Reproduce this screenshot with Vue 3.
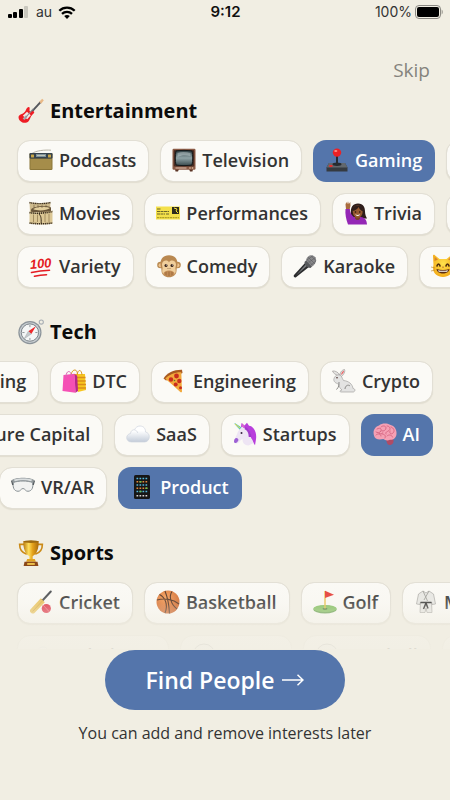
<template>
  <div class="page">
    <svg class="sprite" aria-hidden="true">
      <defs>
        <linearGradient id="gold" x1="0" x2="1" y1="0" y2="0">
          <stop offset="0" stop-color="#b97a10" />
          <stop offset="0.35" stop-color="#ffdf5c" />
          <stop offset="0.6" stop-color="#e5a31b" />
          <stop offset="1" stop-color="#a8690b" />
        </linearGradient>
        <linearGradient id="screen" x1="0" x2="0" y1="0" y2="1">
          <stop offset="0" stop-color="#2c3c40" />
          <stop offset="0.5" stop-color="#8fa3a6" />
          <stop offset="1" stop-color="#3a4a4d" />
        </linearGradient>
        <linearGradient id="snow" x1="0" x2="0" y1="0" y2="1">
          <stop offset="0.3" stop-color="#ffffff" />
          <stop offset="1" stop-color="#c3ccd9" />
        </linearGradient>
        <radialGradient id="orange" cx="0.4" cy="0.3" r="0.8">
          <stop offset="0" stop-color="#f79a52" />
          <stop offset="1" stop-color="#c4551a" />
        </radialGradient>
        <radialGradient id="yellow" cx="0.5" cy="0.4" r="0.7">
          <stop offset="0" stop-color="#ffe24d" />
          <stop offset="1" stop-color="#f2a412" />
        </radialGradient>
      </defs>

      <symbol id="guitar" viewBox="0 0 24 24">
        <path d="M11.5 14 21 3.6" stroke="#55575c" stroke-width="1.8" />
        <path d="m19.6 3.4 2.7-2.6 1.5 1.3-2.4 3.2z" fill="#e9b987" />
        <path d="M7.2 11.4c1-2.7 2.7-3.6 3.4-2.7.6.9-.5 2.7.4 3.5 1 .8 3.1-.4 3.8.4.9 1.1-1.6 2.4-2.7 4.3-1.2 2.1-1.7 5.7-5.1 6C3.4 23.2.3 20.4.5 17.5c.2-2.7 5.5-2.3 6.7-6.1z" fill="#ee1c24" />
        <path d="m8.3 12.7 3.5 3.2-3.3 3.7-4-3.3z" fill="#f5e8e5" />
        <path d="m4.3 18.9 3-3 1.5 1.4-2.8 3z" fill="#a7aab0" />
        <path d="m7 18 7-8" stroke="#8b8e94" stroke-width="1" />
      </symbol>

      <symbol id="radio" viewBox="0 0 24 24">
        <path d="M3 5.5C7 2.5 16 1.7 22 2.2" stroke="#b7b3a6" stroke-width="1" fill="none" />
        <rect x="0.5" y="5" width="23" height="17" rx="1.2" fill="#8b7639" />
        <rect x="0.5" y="5" width="23" height="5.5" rx="1" fill="#37434c" />
        <rect x="7" y="6" width="10" height="3" fill="#7f929b" />
        <path d="M8 7.5h8" stroke="#ece6c6" stroke-width="0.6" />
        <rect x="2" y="6.5" width="3" height="3" rx="0.5" fill="#c8a648" />
        <rect x="19" y="6.5" width="3" height="3" rx="0.5" fill="#c8a648" />
        <rect x="1.5" y="11" width="21" height="10" fill="#a58d4a" />
      </symbol>

      <symbol id="tv" viewBox="0 0 24 24">
        <path d="M3 21h4l-1 2.5H3.5zM17 21h4l-.5 2.5H18z" fill="#5c3526" />
        <rect x="0.5" y="0.8" width="23" height="21" rx="1.2" fill="#8a5a45" />
        <rect x="1.8" y="2" width="20.4" height="16.5" rx="1" fill="#4a2c22" />
        <path d="M4 3c5-.8 11-.8 16 0 1 4.5 1 9.5 0 14-5 .8-11 .8-16 0-1-4.5-1-9.5 0-14z" fill="url(#screen)" stroke="#15191a" stroke-width="1" />
        <path d="M5.500 5c4-1.500 9-1 13 0v3c-5-1-9-1-13 1z" fill="#cedadb" opacity="0.45" />
        <path d="M3.500 20h11" stroke="#e3c3b2" stroke-width="1" />
        <circle cx="18" cy="20" r="0.8" fill="#e6c7a9" />
        <circle cx="20.5" cy="20" r="0.8" fill="#e6c7a9" />
      </symbol>

      <symbol id="joystick" viewBox="0 0 24 24">
        <path d="m4 15 16 0 2.5 4.5v4h-21v-4z" fill="#353a40" />
        <path d="m4 15 16 0 2.5 4.5h-21z" fill="#62686e" />
        <ellipse cx="12" cy="16.3" rx="4.5" ry="1.7" fill="#262a2f" />
        <rect x="11" y="7" width="2" height="10" fill="#272b31" />
        <circle cx="12" cy="4.6" r="4.2" fill="#ed2024" />
        <ellipse cx="10.8" cy="3" rx="1.6" ry="1" fill="#ff8c80" />
        <ellipse cx="5.8" cy="18" rx="2" ry="1" fill="#ef2b2c" />
      </symbol>

      <symbol id="film" viewBox="0 0 24 24">
        <path d="M.5 1C6 2.5 16 2.5 21.5 1l-.5 10H1z" fill="#cfbb8d" />
        <path d="M.5 1.500C6 3 16 3 21.500 1.500" stroke="#3a2e20" stroke-width="1.4" stroke-dasharray="1.2 0.6" fill="none" />
        <path d="M2 8.500c3-3.500 15-4.500 20-2V11H2z" fill="#6a563a" />
        <path d="M4 8c4-2.500 12-3 17-1-3 2.500-12 3.500-17 1z" fill="#e3cf9d" />
        <path d="M5 3.500v4M9 4v3M13 4v3M17 3.500v3" stroke="#6b5839" stroke-width="0.6" />
        <path d="M.5 10.500c6 1.500 17 .5 23-1v13c-6 1.200-17 1.200-23 0z" fill="#dcc795" />
        <path d="M.5 11.500c6 1.500 17 .5 23-1M.5 22c6 1 17 1 23 0" stroke="#35291b" stroke-width="1.6" stroke-dasharray="1.2 0.7" fill="none" />
        <path d="M4.500 13.500V21M8.500 13.500V21M16 13v8M20 12.500V21" stroke="#8a7449" stroke-width="0.7" />
        <path d="M10 13c2 2 2.300 4 2.200 9" stroke="#3a2c1b" stroke-width="1" fill="none" />
      </symbol>

      <symbol id="ticket" viewBox="0 0 24 24">
        <rect y="5.5" width="24" height="13" fill="#f4e04a" />
        <rect x="16" y="6" width="7" height="7" fill="#2c2a1e" />
        <path d="m18 7 3 1-1 2 2 2" stroke="#f4df35" stroke-width="1" fill="none" />
        <path d="M1 8h4M1 10.500h12M1 13h8M10 13h3" stroke="#6b652b" stroke-width="1.2" stroke-dasharray="3 0.5" />
        <path d="M1 16.700h22" stroke="#a0901f" stroke-width="1" stroke-dasharray="2 0.6" />
      </symbol>

      <symbol id="hand" viewBox="0 0 24 24">
        <path d="M7 14C6 6 9 2.500 14 2.500c5.500 0 7 4 7 8 0 3 1 5 2 7H9z" fill="#2e1d1a" />
        <path d="M2 8 1.500 3.500 2.300 1l.9 2L4 .3l.8 2.800L6.300 1l.2 3.800L5.500 9z" fill="#a96b3d" />
        <path d="M1.500 8h4.300c0 3 1.500 6 4 8h7c4 .5 6 3 6.200 7.500H4C2 18 1 13 1.500 8z" fill="#9427b5" />
        <path d="M11 14h5v3.500c-1.500 2-3.500 2-5 0z" fill="#7b4527" />
        <ellipse cx="13.7" cy="10.5" rx="5" ry="6.3" fill="#96592f" />
        <path d="M8.500 10c0-5 4-6 6.500-5.500 3 .5 4 3 4 6-2-1-3.500-2.500-4.500-4.500-1 2-3 3.500-6 4z" fill="#2e1d1a" />
        <circle cx="11.5" cy="11" r="0.8" fill="#1f1210" />
        <circle cx="15.8" cy="11" r="0.8" fill="#1f1210" />
        <path d="M11.300 13.300c1.500 1 3.200 1 4.700 0-.5 2.200-4 2.300-4.700 0z" fill="#fff" />
      </symbol>

      <symbol id="hundred" viewBox="0 0 24 24">
        <text x="1" y="14" transform="rotate(-5 12 12)" class="hundred-digits">100</text>
        <path d="M2.500 18.500c6-1.300 12-2 18-2.200M5.500 22.300c4-1 8-1.500 12-1.600" stroke="#e41c23" stroke-width="1.6" stroke-linecap="round" fill="none" />
      </symbol>

      <symbol id="monkey" viewBox="0 0 24 24">
        <circle cx="3.5" cy="11" r="3.3" fill="#b98a52" />
        <circle cx="20.5" cy="11" r="3.3" fill="#b98a52" />
        <circle cx="3.6" cy="11.3" r="2" fill="#eec48f" />
        <circle cx="20.4" cy="11.3" r="2" fill="#eec48f" />
        <path d="M12 1.200c6 0 8.500 4 8.500 8.500 0 3-1 4-1 7 0 4-3.500 6.500-7.500 6.500s-7.500-2.500-7.500-6.500c0-3-1-4-1-7C3.500 5.200 6 1.200 12 1.200z" fill="#b98850" />
        <path d="M12 8.500c1-3 7-2.500 7 2 0 2-1 3-.3 5.500.6 4-2.700 6-6.700 6s-7.300-2-6.700-6C6 13.500 5 12.500 5 10.500c0-4.500 6-5 7-2z" fill="#f0cf9c" />
        <ellipse cx="12" cy="19.500" rx="5.500" ry="3" fill="#c08a54" />
        <circle cx="9" cy="11.5" r="1.5" fill="#352017" />
        <circle cx="15" cy="11.5" r="1.5" fill="#352017" />
        <circle cx="9.4" cy="11" r="0.5" fill="#fff" />
        <circle cx="15.4" cy="11" r="0.5" fill="#fff" />
        <path d="M10.700 14.500h.6M12.700 14.500h.6" stroke="#6d4324" stroke-width="1" />
        <path d="M9 18v3.500M12 17.500v4.500M15 18v3.500" stroke="#8f5c33" stroke-width="0.7" />
      </symbol>

      <symbol id="mic" viewBox="0 0 24 24">
        <path d="m12.500 8.500 4 4L3 23.300c-1.500.8-3-.7-2-2.200z" fill="#2a2b2d" />
        <path d="m13 10 1.500 1.500L3 21.500z" fill="#77797c" />
        <path d="m11.500 8 2-2 6 6-2 2c-2.700.2-6-3-6-6z" fill="#56585b" />
        <path d="M13 6.500c.5-4.500 5-6.500 8.200-4.300 3.500 2.800 2 8-2.500 10.300z" fill="#89898b" />
        <path d="m15 3 7 7M14 5.500l6 6M18 1.800l5 5M22.500 3.500l-7 5M20 1.800l-6 4M23 7l-5 4" stroke="#5d5d5f" stroke-width="0.6" />
      </symbol>

      <symbol id="cat" viewBox="0 0 24 24">
        <path d="M2.500 11 2 2c0-1 1-1.500 1.800-.8L8.500 5h7l4.700-3.800c.8-.7 1.800-.2 1.800.8l-.5 9c2 7-3 12-9.500 12S.5 18 2.500 11z" fill="url(#yellow)" />
        <path d="m3.500 7 .2-4L7 5.500zM20.500 7l-.2-4L17 5.500z" fill="#d9822b" />
        <path d="M6 12c.5-2.500 2.500-2.500 3 0M15 12c.5-2.500 2.500-2.500 3 0" stroke="#52300e" stroke-width="1.6" fill="none" stroke-linecap="round" />
        <path d="M5.500 15c4 1.200 9 1.200 13 0-.5 6-12.500 6-13 0z" fill="#5c2d12" />
        <path d="M7 16.300c3 .7 7 .7 10 0l-.8 1.500H7.800z" fill="#fff" />
        <path d="m11 12.800h2l-1 1.300z" fill="#a04a28" />
        <path d="m0 13 4 1M0 17l4-1M24 13l-4 1M24 17l-4-1" stroke="#b5781a" stroke-width="0.6" />
      </symbol>

      <symbol id="compass" viewBox="0 0 24 24">
        <circle cx="21.5" cy="2.8" r="1.9" fill="none" stroke="#a9afb5" stroke-width="1" />
        <circle cx="11" cy="12.5" r="10.7" fill="#8b9399" />
        <circle cx="11" cy="12.5" r="9.6" fill="#c8ced2" />
        <circle cx="11" cy="12.5" r="8" fill="#f4f6f6" stroke="#6d757b" stroke-width="0.8" />
        <path d="M11 5.500v2M11 17.500v2M4 12.500h2M16 12.500h2" stroke="#70777c" stroke-width="0.7" />
        <path d="m16.500 6.700-7 4.500 2.800 2.600z" fill="#ee2a2c" />
        <path d="m5.500 18.500 4-7.300 2.800 2.600z" fill="#c4c8cb" stroke="#8f9599" stroke-width="0.3" />
      </symbol>

      <symbol id="bags" viewBox="0 0 24 24">
        <path d="M12 5h11l1 16-8 2z" fill="#f7c51e" />
        <path d="M14 8.500h9.500M14 12h9.700M15 15.500h9M15 19h9" stroke="#db8e18" stroke-width="1.3" />
        <path d="M9 6c1-6 6-7 6.500-1M15 6c1-6 4.500-6 5 0" stroke="#d89a27" stroke-width="1" fill="none" />
        <path d="m1.500 6 11-1.300 1 19L.5 22z" fill="#f550b5" />
        <path d="m12.500 4.700 2.700 2L16 22l-2.500 1.700z" fill="#b9268a" />
        <path d="M4 8C4 1.500 8.500.5 9.500 6.500" stroke="#d76cb4" stroke-width="1" fill="none" />
      </symbol>

      <symbol id="pizza" viewBox="0 0 24 24">
        <path d="M.5 9.500C4 4 11 .6 19 .8L19.500 4 3 11.500z" fill="#a95a20" />
        <path d="M2.300 9.700C6 5.500 12 3 18.300 3.200L19 22.500c0 1.200-1.300 1-2 .3C12.500 18.500 7.500 14 2.300 9.700z" fill="#f2a93c" />
        <circle cx="13.5" cy="7" r="2.4" fill="#c92d1e" />
        <circle cx="8" cy="10.5" r="2.2" fill="#c92d1e" />
        <circle cx="16.3" cy="12" r="2.2" fill="#c92d1e" />
        <circle cx="12.7" cy="15.5" r="2" fill="#c92d1e" />
        <circle cx="17.5" cy="18.8" r="1.5" fill="#c92d1e" />
        <circle cx="11.5" cy="11.5" r="0.8" fill="#5b7d29" />
      </symbol>

      <symbol id="rabbit" viewBox="0 0 24 24">
        <path d="M8 7.500C7.500 4 9.500 1 12.500.5c1 1.700-.5 5-3 7zM5.500 6.500C3.500 5.500 1 4 .5 2 2.500 1.500 6 3 7.500 5.500z" fill="#e4e3e1" stroke="#94918f" stroke-width="0.6" />
        <path d="M9 6c.2-2 1.500-4 3-4.500 0 1.500-1.200 3.500-3 4.500z" fill="#eb5f62" />
        <path d="M2 9.500C3 6 7 4.500 9.500 7.500c1 1.500 1 3 2 4 5 .5 9 3.500 9.500 8 2.500 0 2.500 3 .3 3.500H8.500c-1-.8 0-2 1.500-2-2-1.500-3-3.500-3.300-6C4 14.500 1 12.500 2 9.500z" fill="#e3e3e2" stroke="#a3a2a0" stroke-width="0.7" />
        <path d="M13 20c0-3 3-5 5-3M7 13c0 3 0 5-2.500 7.500" stroke="#8b8a88" stroke-width="1" fill="none" />
        <circle cx="5" cy="8.8" r="0.8" fill="#442525" />
      </symbol>

      <symbol id="cloud" viewBox="0 0 24 24">
        <path d="M5.500 20C2.500 20 .7 18 .7 15.700c0-2.200 1.600-3.900 3.800-4.200C4.700 9 6.500 7.500 8.500 7.800 9.500 5.500 11.500 4 14 4c3.500 0 5.700 2.700 5.500 6 2.300.4 3.800 2.300 3.800 4.700 0 3-2 5.300-5 5.300z" fill="url(#snow)" stroke="#ced4de" stroke-width="0.7" />
        <path d="M8.500 8c2 .3 3 1.500 3.200 3" stroke="#d6dbe2" stroke-width="0.8" fill="none" />
      </symbol>

      <symbol id="unicorn" viewBox="0 0 24 24">
        <path d="M7 8 1.500 2l.3-1L9.500 6z" fill="#55c8ba" />
        <path d="m2 2 5 4" stroke="#f3d94f" stroke-width="1" />
        <path d="M8 5 8.500 1l3 2.500L14 .8l2 3c5 .5 8 7 7 13.500l-1 6-5-8-8-8z" fill="#b83edc" />
        <path d="M7.500 6.500 9 4.500l2 1.500c4 0 6.500 3 6.500 7 0 3.500 2.500 4.500 3 8l-5 2.500c-5-.5-6-3.500-6-6.500-2 .5-3 3.500-5.500 4.500C2 22 .5 19.500 1.500 17.500 3 15 4 12 5 9.500z" fill="#eee5f4" />
        <path d="M1.500 17.500C3 15 5 16 5.500 18c-1 2-2 3.500-3.500 3-1.300-.6-1.200-2.200-.5-3.500z" fill="#9d60d4" />
        <path d="m9 4.500.5-3.500 2.500 5z" fill="#dd6ccb" />
        <path d="M12 6c4 2 5 5 5 9" stroke="#a13acb" stroke-width="2.5" fill="none" />
        <circle cx="8.5" cy="11" r="1" fill="#35243f" />
      </symbol>

      <symbol id="brain" viewBox="0 0 24 24">
        <path d="M13 18c2-1.500 6-2 7.500 0 .5 3-1.500 5-4 5-2.300 0-2.500-3-3.500-5z" fill="#b14b65" />
        <path d="M1 13.500C-.5 9 2 4.500 6 3.500 9 1 14 1 17 2.800c4 .7 6.800 4.500 6.500 8.500.2 4-3 6.700-6.500 6.500-2.500 1.200-5 .7-6.500-.8C6 18 1.500 17.500 1 13.500z" fill="#f5a0b4" />
        <path d="M4 7c3-2 5 0 4 2s-4 2-5 1M8 5c2-2 5-1 5 1s-2 3-4 3M14 4c3 0 4 3 2 4.500S12 10 13 12M18 5c3 1 4 4 2 6s-4 0-3-2M3 13c2-2 5-1 5 1M9 12c3 0 4 2 3 4M14 14c2-2 5-1 5.500 1M6 11.500c2 1 3 0 4-1" stroke="#d4637f" stroke-width="0.9" fill="none" stroke-linecap="round" />
      </symbol>

      <symbol id="goggles" viewBox="0 0 24 24">
        <path d="M1 5c3-3 19-3 22 0l-.5 5h-21z" fill="#949b9e" />
        <path d="M3 4.500c3-1.500 15-1.500 18 0l-.6 1.800C15 5 9 5 3.600 6.300z" fill="#dadedf" />
        <path d="M2.500 7.500C7 5.500 17 5.500 21.500 7.500c1 4 0 8.500-4.500 8.800-2.500.2-3-2.800-5-2.800s-2.500 3-5 2.800C2.500 16 1.500 11.500 2.500 7.500z" fill="#f1f2f1" stroke="#8a9296" stroke-width="1" />
        <path d="m.5 5.500 1.300 4.500M23.500 5.500 22.200 10" stroke="#555c60" stroke-width="1.2" />
      </symbol>

      <symbol id="phone" viewBox="0 0 24 24">
        <rect x="4" width="16" height="24" rx="1.6" fill="#161616" />
        <path d="M6.500 3.500h11M6.500 10h11M6.500 16.500h11" stroke="#54b8dd" stroke-width="1.5" stroke-dasharray="1.7 1.3" />
        <path d="M6.500 6.700h11M6.500 13.200h11" stroke="#e2873c" stroke-width="1.5" stroke-dasharray="1.7 1.3" />
        <path d="M9.500 6.700h2M15.500 13.200h2M9.500 16.500h2" stroke="#69c651" stroke-width="1.5" />
        <path d="M6.500 20.800h11" stroke="#d8d8d8" stroke-width="1.5" stroke-dasharray="1.7 1.3" />
      </symbol>

      <symbol id="trophy" viewBox="0 0 24 24">
        <path d="M6 4H1.500c0 5 2 8 6.500 9M18 4h4.500c0 5-2 8-6.500 9" stroke="#cb8a17" stroke-width="1.5" fill="none" />
        <path d="M5 1h14c.5 7-2 12.500-5.500 14v4h-3v-4C7 13.500 4.500 8 5 1z" fill="url(#gold)" />
        <ellipse cx="12" cy="1.5" rx="7" ry="1.2" fill="#9d6a10" />
        <path d="M8.500 17.500h7l1 2.500h-9z" fill="#e1a321" />
        <path d="M6 20h12l.8 4H5.200z" fill="#8b4719" />
        <path d="M8.500 21.200h7V23h-7z" fill="#ecc14b" />
      </symbol>

      <symbol id="cricket" viewBox="0 0 24 24">
        <path d="m13.500 10.500 8.300-9" stroke="#45484d" stroke-width="2" stroke-linecap="round" />
        <path d="m11.800 8.200 4 4L5.500 23c-1 1-2.500.7-3.500-.3-1.300-1-1.500-2.400-.4-3.500z" fill="#eac45f" />
        <path d="m12 9 1.700 1.700L3.500 21.500" stroke="#cfa440" stroke-width="0.8" fill="none" />
        <circle cx="17.3" cy="18.5" r="4.6" fill="#df3447" />
        <path d="m14.500 15.500 5.500 6" stroke="#f3abb0" stroke-width="0.9" stroke-dasharray="1 0.5" />
      </symbol>

      <symbol id="basketball" viewBox="0 0 24 24">
        <circle cx="12" cy="12" r="11.5" fill="url(#orange)" />
        <path d="M9 1c2 5 4 13 4.500 22.500M1 10c7-2 16-1 22 4M3.500 4.500C9 7 12.500 15 9 23M16 1.500c-3.500 5-1 13 5 17.500" stroke="#4d2a17" stroke-width="1.1" fill="none" />
      </symbol>

      <symbol id="golf" viewBox="0 0 24 24">
        <ellipse cx="12" cy="19.5" rx="11.7" ry="4" fill="#5f9d47" />
        <ellipse cx="12" cy="18.5" rx="11.7" ry="3.6" fill="#7fbe5c" />
        <ellipse cx="12" cy="18.8" rx="2.5" ry="0.9" fill="#456f35" />
        <path d="M12 1v17.500" stroke="#e9bf45" stroke-width="1.4" />
        <path d="m12 .8 9 4L12 8z" fill="#e5342f" />
      </symbol>

      <symbol id="gi" viewBox="0 0 24 24">
        <path d="m9 1 3 2 3-2 4.500 3 2 10-3.500.5-.5-2.500.5 10.500h-5L12 18l-1 4.500H6L6.500 12l-.5 2.500L2.500 14l2-10z" fill="#e7e7e4" stroke="#a09f9c" stroke-width="0.7" />
        <path d="m9 1 4.500 10M15 1l-5 9" stroke="#999894" stroke-width="0.9" />
        <path d="M6.500 12.500h11M12 13l-2.500 6M12 13l2 5.500" stroke="#333" stroke-width="1.5" />
      </symbol>

      <symbol id="ball" viewBox="0 0 24 24">
        <circle cx="12" cy="12" r="11" fill="#f4f4f4" stroke="#999" stroke-width="1" />
        <path d="m12 7 5 3.500-2 5.500H9l-2-5.500z" fill="#333" />
      </symbol>
    </svg>

    <header class="status">
      <div class="status-side">
        <svg class="signal" viewBox="0 0 20 12" aria-hidden="true">
          <rect y="8" width="4" height="4" rx="1" />
          <rect x="5" y="6" width="4" height="6" rx="1" />
          <rect x="11" y="3" width="4" height="9" rx="1" />
          <rect x="16" width="4" height="12" rx="1" fill="#c9c7be" />
        </svg>
        <span>au</span>
        <svg class="wifi" viewBox="0 0 18 13" aria-hidden="true">
          <path d="M1.300 4.800C5.600.6 12.400.6 16.700 4.800M4 7.800c2.800-2.700 7.200-2.700 10 0" fill="none" stroke="#000" stroke-width="2.3" />
          <path d="M6.200 10c1.600-1.500 4-1.500 5.600 0L9 13z" />
        </svg>
      </div>
      <strong class="clock">9:12</strong>
      <div class="status-side status-right">
        <span>100%</span>
        <svg class="battery" viewBox="0 0 28 14" aria-hidden="true">
          <rect x="0.5" y="0.5" width="25" height="13" rx="3.5" fill="none" stroke="#8b8983" />
          <rect x="2" y="2" width="22" height="10" rx="2" />
          <path d="M26.700 4.500c1.300.7 1.300 4.300 0 5z" fill="#8b8983" />
        </svg>
      </div>
    </header>

    <nav class="top">
      <button type="button" class="skip">Skip</button>
    </nav>

    <main class="interests">
      <section v-for="group in groups" :key="group.title" class="group">
        <h2>
          <svg class="title-icon" aria-hidden="true"><use :href="'#' + group.icon" /></svg>
          {{ group.title }}
        </h2>
        <div v-for="(row, i) in group.rows" :key="i" class="row" :class="row.scroll">
          <button
            v-for="item in row.items"
            :key="item.name"
            type="button"
            class="chip"
            :class="{ selected: item.selected }"
            :aria-pressed="!!item.selected"
            @click="item.selected = !item.selected"
          >
            <svg class="icon" aria-hidden="true"><use :href="'#' + item.icon" /></svg>
            <span>{{ item.name }}</span>
          </button>
        </div>
      </section>
    </main>

    <footer class="bottom">
      <button type="button" class="find">
        Find People
        <svg class="arrow" viewBox="0 0 22 12" aria-hidden="true">
          <path d="M0 6h21M15.500.8 21 6l-5.500 5.200" fill="none" stroke="#fff" stroke-width="1.5" />
        </svg>
      </button>
      <p>You can add and remove interests later</p>
    </footer>
  </div>
</template>

<script setup>
import { reactive } from 'vue';

const groups = reactive([
  {
    title: 'Entertainment',
    icon: 'guitar',
    rows: [
      {
        items: [
          { name: 'Podcasts', icon: 'radio' },
          { name: 'Television', icon: 'tv' },
          { name: 'Gaming', icon: 'joystick', selected: true },
          { name: 'Music', icon: 'guitar' }
        ]
      },
      {
        items: [
          { name: 'Movies', icon: 'film' },
          { name: 'Performances', icon: 'ticket' },
          { name: 'Trivia', icon: 'hand' },
          { name: 'Radio', icon: 'radio' }
        ]
      },
      {
        items: [
          { name: 'Variety', icon: 'hundred' },
          { name: 'Comedy', icon: 'monkey' },
          { name: 'Karaoke', icon: 'mic' },
          { name: 'Memes', icon: 'cat' }
        ]
      }
    ]
  },
  {
    title: 'Tech',
    icon: 'compass',
    rows: [
      {
        scroll: 'scroll-end',
        items: [
          { name: 'Marketing', icon: 'phone' },
          { name: 'DTC', icon: 'bags' },
          { name: 'Engineering', icon: 'pizza' },
          { name: 'Crypto', icon: 'rabbit' }
        ]
      },
      {
        scroll: 'scroll-end',
        items: [
          { name: 'Venture Capital', icon: 'unicorn' },
          { name: 'SaaS', icon: 'cloud' },
          { name: 'Startups', icon: 'unicorn' },
          { name: 'AI', icon: 'brain', selected: true }
        ]
      },
      {
        scroll: 'scroll-mid',
        items: [
          { name: 'VR/AR', icon: 'goggles' },
          { name: 'Product', icon: 'phone', selected: true }
        ]
      }
    ]
  },
  {
    title: 'Sports',
    icon: 'trophy',
    rows: [
      {
        items: [
          { name: 'Cricket', icon: 'cricket' },
          { name: 'Basketball', icon: 'basketball' },
          { name: 'Golf', icon: 'golf' },
          { name: 'Martial Arts', icon: 'gi' }
        ]
      },
      {
        items: [
          { name: 'Badminton', icon: 'cloud' },
          { name: 'Soccer', icon: 'ball' },
          { name: 'Baseball', icon: 'ball' },
          { name: 'Tennis', icon: 'ball' }
        ]
      }
    ]
  }
]);
</script>

<style>
body {
  background: #f1eee3;
}
</style>

<style scoped>
.page {
  display: flex;
  flex-direction: column;
  height: 100vh;
  overflow: hidden;
  background: #f1eee3;
  color: #333;
  font-family: 'Open Sans', 'Noto Sans', sans-serif;
}

button {
  font: inherit;
  cursor: pointer;
}

.sprite {
  position: absolute;
  width: 0;
  height: 0;
}

.hundred-digits {
  font: italic bold 13px 'Liberation Sans', sans-serif;
  fill: #e41c23;
}

.status {
  display: grid;
  grid-template-columns: 1fr auto 1fr;
  align-items: center;
  height: 24px;
  padding: 0 7px 0 8px;
  font: 14px/24px Inter, sans-serif;
  color: #111;
}

.status-side {
  display: flex;
  align-items: center;
  gap: 6px;
}

.status-side span {
  color: #333;
}

.status-right {
  justify-content: flex-end;
  gap: 3px;
}

.signal {
  width: 20px;
  height: 12px;
  margin-right: 2px;
}

.wifi {
  width: 18px;
  height: 13px;
}

.battery {
  width: 28px;
  height: 14px;
}

.clock {
  font-size: 15px;
  font-weight: 600;
}

.top {
  display: flex;
  justify-content: flex-end;
  padding: 34px 20px 14px;
}

.skip {
  padding: 0;
  border: 0;
  background: none;
  color: #85837d;
  font-size: 19px;
  line-height: 24px;
}

.interests {
  position: relative;
  flex: 1;
  min-height: 0;
  overflow: hidden;
}

.interests::after {
  content: '';
  position: absolute;
  right: 0;
  bottom: 0;
  left: 0;
  height: 76px;
  background: linear-gradient(
    rgba(241, 238, 227, 0),
    rgba(241, 238, 227, 0.2) 40%,
    rgba(241, 238, 227, 0.85) 80%,
    rgba(241, 238, 227, 0.9)
  );
  pointer-events: none;
}

.group {
  margin-bottom: 29px;
}

h2 {
  display: flex;
  align-items: center;
  gap: 6px;
  margin: 0 0 14px;
  padding-left: 18px;
  color: #0b0b0b;
  font-size: 20px;
  font-weight: 700;
  line-height: 30px;
}

.title-icon {
  width: 26px;
  height: 26px;
}

.row {
  display: flex;
  gap: 11px;
  margin-bottom: 11px;
  padding: 0 17px;
}

.scroll-end {
  justify-content: flex-end;
}

.scroll-mid {
  margin-left: -18px;
}

.chip {
  display: flex;
  flex: none;
  align-items: center;
  gap: 6px;
  height: 42px;
  padding: 0 12px 2px 11px;
  border: 1px solid #e2dfd5;
  border-radius: 13px;
  background: #fbfaf6;
  background-clip: padding-box;
  box-shadow: 0 1px 1px rgba(90, 80, 50, 0.1);
  color: #333;
  font-size: 18px;
  font-weight: 600;
  line-height: 24px;
  white-space: nowrap;
}

.chip.selected {
  border-color: transparent;
  background-color: #5475ab;
  background-clip: border-box;
  box-shadow: none;
  color: #fff;
}

.icon {
  width: 24px;
  height: 24px;
}

.bottom {
  display: flex;
  flex-direction: column;
  align-items: center;
  padding: 1px 20px 55px;
}

.find {
  display: flex;
  align-items: center;
  gap: 8px;
  height: 60px;
  padding: 0 41px;
  border: 0;
  border-radius: 30px;
  background: #5475ab;
  color: #fff;
  font-size: 23px;
  font-weight: 600;
}

.arrow {
  width: 22px;
  height: 12px;
}

.bottom p {
  margin: 11px 0 0;
  font-size: 16px;
  line-height: 24px;
}
</style>
